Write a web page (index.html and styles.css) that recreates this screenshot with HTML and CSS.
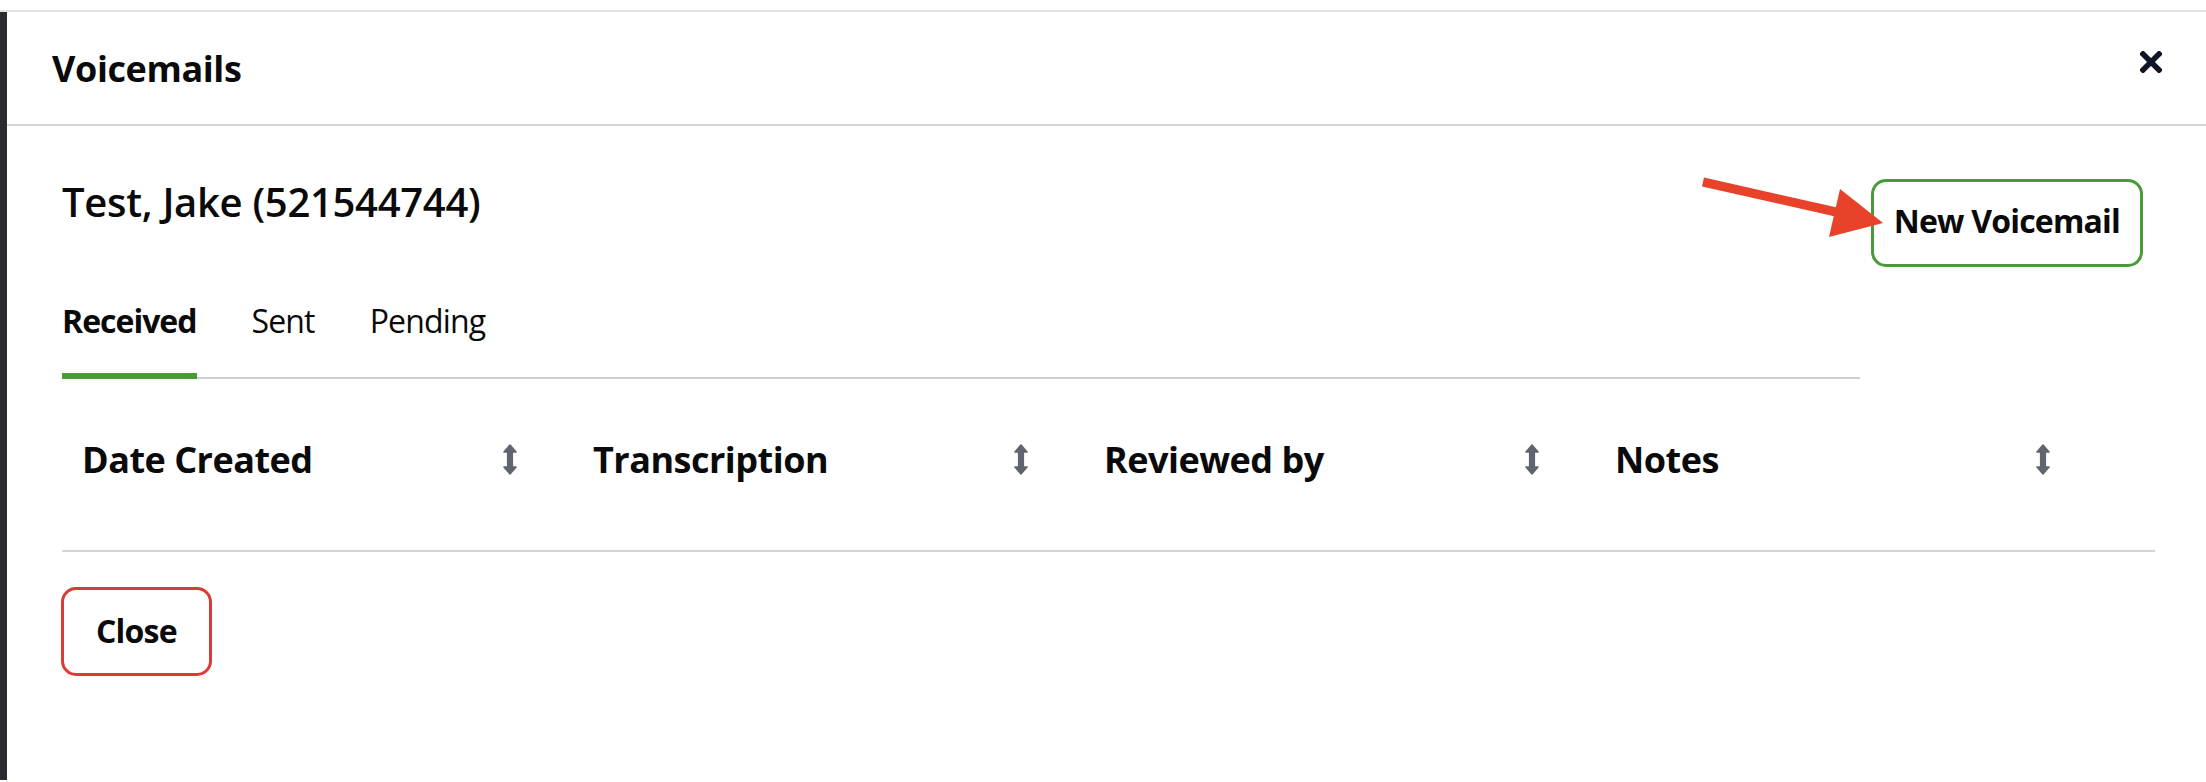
FILE: index.html
```html
<!DOCTYPE html>
<html lang="en">
<head>
<meta charset="utf-8">
<title>Voicemails</title>
<link rel="stylesheet" href="styles.css">
</head>
<body>
<div class="app">
  <div class="edge"></div>
  <div class="modal">
    <div class="modal-header">
      <h1 class="modal-title">Voicemails</h1>
      <button class="close-x" aria-label="Close">
        <svg width="22" height="22" viewBox="0 0 22 22"><path d="M3 3 L19 19 M19 3 L3 19" stroke="#0f1526" stroke-width="5.5" stroke-linecap="square" fill="none"/></svg>
      </button>
    </div>
    <div class="modal-body">
      <div class="top">
        <div class="info">
          <h2 class="patient">Test, Jake (521544744)</h2>
          <div class="tabs">
            <div class="tab active">Received</div>
            <div class="tab">Sent</div>
            <div class="tab">Pending</div>
          </div>
        </div>
        <button class="btn btn-new">New Voicemail</button>
      </div>
      <div class="table-head">
        <div class="th"><span>Date Created</span><svg class="sort" width="14" height="31" viewBox="0 0 14 31"><path d="M7 1 L13 8 L9.3 8 L9.3 23 L13 23 L7 30 L1 23 L4.7 23 L4.7 8 L1 8 Z" fill="#60646e" stroke="#60646e" stroke-width="1.6" stroke-linejoin="round"/></svg></div>
        <div class="th"><span>Transcription</span><svg class="sort" width="14" height="31" viewBox="0 0 14 31"><path d="M7 1 L13 8 L9.3 8 L9.3 23 L13 23 L7 30 L1 23 L4.7 23 L4.7 8 L1 8 Z" fill="#60646e" stroke="#60646e" stroke-width="1.6" stroke-linejoin="round"/></svg></div>
        <div class="th"><span>Reviewed by</span><svg class="sort" width="14" height="31" viewBox="0 0 14 31"><path d="M7 1 L13 8 L9.3 8 L9.3 23 L13 23 L7 30 L1 23 L4.7 23 L4.7 8 L1 8 Z" fill="#60646e" stroke="#60646e" stroke-width="1.6" stroke-linejoin="round"/></svg></div>
        <div class="th"><span>Notes</span><svg class="sort" width="14" height="31" viewBox="0 0 14 31"><path d="M7 1 L13 8 L9.3 8 L9.3 23 L13 23 L7 30 L1 23 L4.7 23 L4.7 8 L1 8 Z" fill="#60646e" stroke="#60646e" stroke-width="1.6" stroke-linejoin="round"/></svg></div>
        <div class="th th-empty"></div>
      </div>
      <button class="btn btn-close">Close</button>
    </div>
  </div>
</div>
<svg class="annotation" width="200" height="80" viewBox="0 0 200 80">
  <line x1="8" y1="12" x2="150" y2="44" stroke="#e8432a" stroke-width="9"/>
  <polygon points="188,53 145,19 134,67" fill="#e8432a"/>
</svg>
</body>
</html>
```

FILE: styles.css
```css
* { box-sizing: border-box; }

html, body {
  margin: 0;
  padding: 0;
  background: #ffffff;
  font-family: "Open Sans", "Liberation Sans", sans-serif;
  color: #0a0a0a;
}

body {
  position: relative;
  height: 782px;
  overflow: hidden;
}

.app {
  margin-top: 10px;
  border-top: 2px solid #e3e3e5;
  display: flex;
  height: 770px;
}

.edge {
  width: 7px;
  background: #2b2c30;
  flex: none;
}

.modal {
  flex: 1;
  background: #ffffff;
}

.modal-header {
  height: 114px;
  border-bottom: 2px solid #d4d4d8;
  display: flex;
  align-items: center;
  justify-content: space-between;
  padding: 0 44px 0 45px;
}

.modal-title {
  margin: 0;
  font-size: 36px;
  line-height: 49px;
  font-weight: 700;
  letter-spacing: -0.4px;
}

.close-x {
  border: 0;
  background: none;
  padding: 0;
  width: 22px;
  height: 22px;
  margin-bottom: 13px;
  display: block;
}
.close-x svg { display: block; }

.modal-body {
  padding: 49px 51px 0 55px;
}

.top {
  display: flex;
  justify-content: space-between;
  align-items: flex-start;
  padding-right: 12px;
}

.info {
  width: 1798px;
}

.patient {
  margin: 0;
  font-size: 40px;
  line-height: 54px;
  font-weight: 600;
  letter-spacing: -0.3px;
}

.tabs {
  margin-top: 70px;
  display: flex;
  gap: 55px;
  box-shadow: inset 0 -2px 0 #cfcdd3;
}

.tab {
  font-size: 32px;
  line-height: 44px;
  font-weight: 400;
  letter-spacing: -0.85px;
  padding-bottom: 30px;
  border-bottom: 6px solid transparent;
}

.tab.active {
  font-weight: 700;
  letter-spacing: -1px;
  border-bottom-color: #489a35;
}

.btn {
  font-family: "Open Sans", "Liberation Sans", sans-serif;
  font-size: 32px;
  line-height: 46px;
  font-weight: 700;
  letter-spacing: -0.8px;
  color: #0a0a0a;
  background: #ffffff;
  border-radius: 15px;
  border: 3px solid;
}

.btn-new {
  margin-top: 4px;
  border-color: #4a9b37;
  padding: 16px 20px 20px;
  flex: none;
}

.table-head {
  display: grid;
  grid-template-columns: 511px 511px 511px 511px 1fr;
  border-bottom: 2px solid #d4d4d8;
}

.th {
  display: flex;
  align-items: center;
  justify-content: space-between;
  padding: 56px 56px 66px 20px;
  font-size: 36px;
  line-height: 49px;
  font-weight: 700;
  letter-spacing: -0.5px;
}

.th-empty { padding: 0; }

.sort { display: block; flex: none; }

.btn-close {
  margin-top: 35px;
  margin-left: -1px;
  border-color: #dc3b35;
  padding: 18px 32px 19px;
}

.annotation {
  position: absolute;
  left: 1695px;
  top: 170px;
}
```
